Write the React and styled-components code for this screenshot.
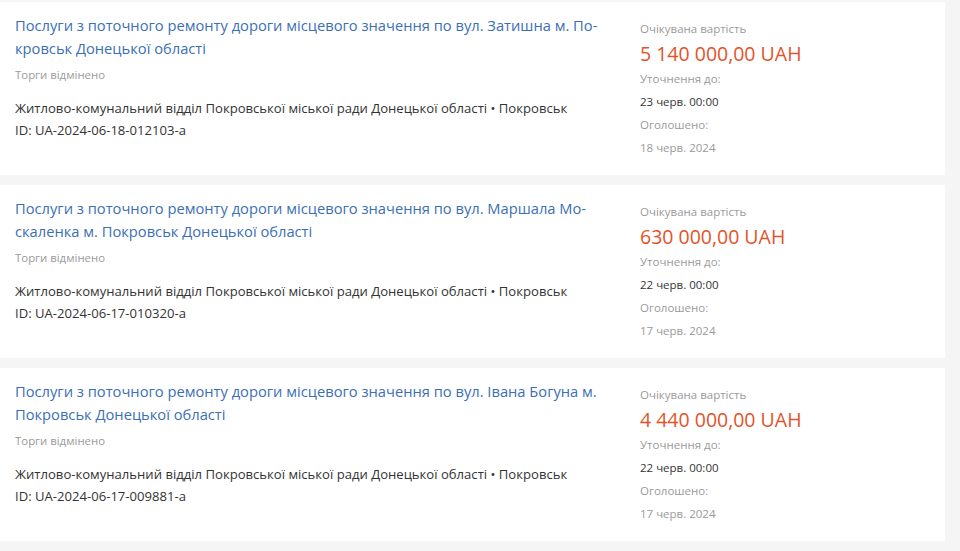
import React from "react";
import styled, { createGlobalStyle } from "styled-components";

const GlobalStyle = createGlobalStyle`
  body {
    margin: 0;
    background: #f5f5f5;
    font-family: "Open Sans", "Noto Sans", sans-serif;
  }
`;

const List = styled.div`
  width: 945px;
  padding-top: 2px;
  display: flex;
  flex-direction: column;
  gap: 10px;
`;

const Card = styled.div`
  background: #fff;
  display: grid;
  grid-template-columns: 640px 1fr;
`;

const Main = styled.div`
  padding: 12px 25px 0 15px;
`;

const Title = styled.a`
  display: block;
  width: 595px;
  color: #3b6fb5;
  font-size: 14.7px;
  line-height: 23px;
  text-decoration: none;
`;

const Status = styled.div`
  margin-top: 6px;
  font-size: 11.4px;
  line-height: 18px;
  color: #9a9a9a;
`;

const Info = styled.div`
  margin-top: 13px;
  font-size: 13.1px;
  line-height: 22px;
  color: #333;
`;

const Side = styled.div`
  padding: 15px 0 16px;
`;

const Label = styled.div`
  font-size: 11.5px;
  line-height: 23px;
  color: ${(p) => (p.$dark ? "#333" : "#9a9a9a")};
`;

const Price = styled.div`
  font-size: 19.5px;
  line-height: 27px;
  color: #e3532b;
`;

const tenders = [
  {
    title: "Послуги з поточного ремонту дороги місцевого значення по вул. Затишна м. По\u00ADкровськ Донецької області",
    id: "UA-2024-06-18-012103-a",
    price: "5 140 000,00 UAH",
    until: "23 черв. 00:00",
    published: "18 черв. 2024",
  },
  {
    title: "Послуги з поточного ремонту дороги місцевого значення по вул. Маршала Мо\u00ADскаленка м. Покровськ Донецької області",
    id: "UA-2024-06-17-010320-a",
    price: "630 000,00 UAH",
    until: "22 черв. 00:00",
    published: "17 черв. 2024",
  },
  {
    title: "Послуги з поточного ремонту дороги місцевого значення по вул. Івана Богуна м. Покровськ Донецької області",
    id: "UA-2024-06-17-009881-a",
    price: "4 440 000,00 UAH",
    until: "22 черв. 00:00",
    published: "17 черв. 2024",
  },
];

const App = () => {
  return (
    <>
      <GlobalStyle />
      <List>
        {tenders.map((t) => (
          <Card key={t.id}>
            <Main>
              <Title href="#">{t.title}</Title>
              <Status>Торги відмінено</Status>
              <Info>
                Житлово-комунальний відділ Покровської міської ради Донецької області • Покровськ
                <br />
                ID: {t.id}
              </Info>
            </Main>
            <Side>
              <Label>Очікувана вартість</Label>
              <Price>{t.price}</Price>
              <Label>Уточнення до:</Label>
              <Label $dark>{t.until}</Label>
              <Label>Оголошено:</Label>
              <Label>{t.published}</Label>
            </Side>
          </Card>
        ))}
      </List>
    </>
  );
};

export default App;
